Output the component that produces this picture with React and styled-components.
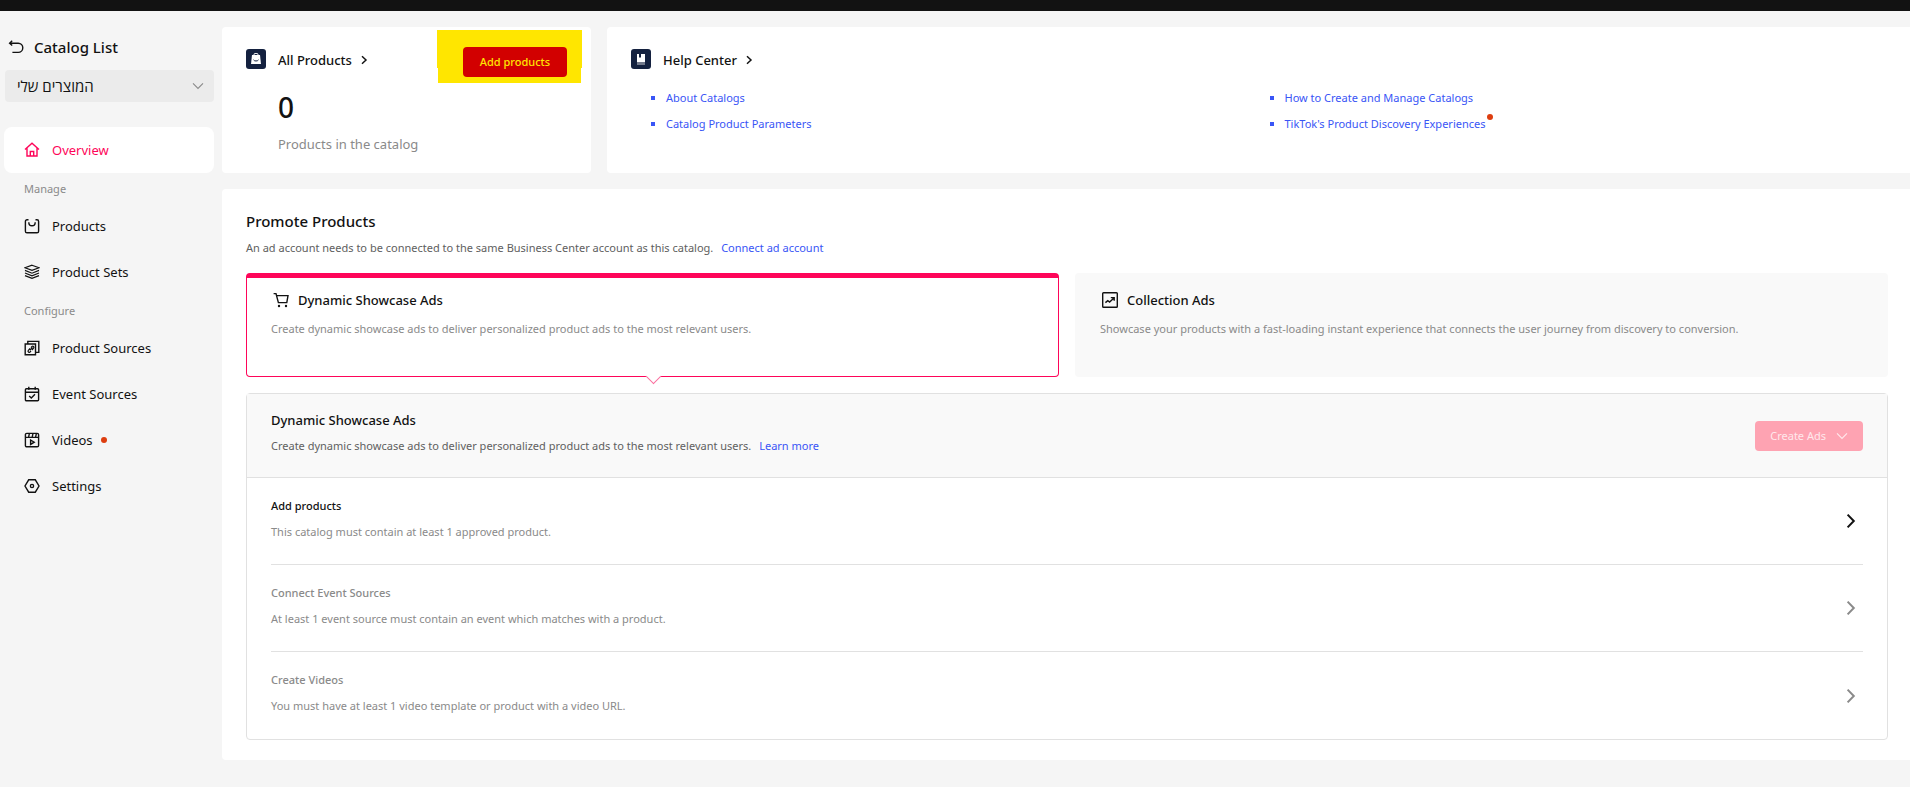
import React from 'react';
import styled, { createGlobalStyle, css } from 'styled-components';

const GlobalStyle = createGlobalStyle`
    * {
        box-sizing: border-box;
    }
    body {
        margin: 0;
        background: #f5f5f5;
        color: #121212;
        font-family: 'Noto Sans', 'Open Sans', sans-serif;
        font-size: 13px;
        line-height: 20px;
    }
    h1, h2, h3, p, ul {
        margin: 0;
        padding: 0;
    }
    button, select {
        font-family: inherit;
    }
`
const TopBar = styled.header`
    height: 11px;
    background: #121212;
`
const Page = styled.div`
    display: flex;
    min-height: calc(100vh - 11px);
    background: #f5f5f5;
`
const Sidebar = styled.aside`
    flex: 0 0 222px;
    padding: 24px 8px 0 4px;
`
const BackLink = styled.a`
    display: flex;
    align-items: center;
    gap: 10px;
    height: 24px;
    padding-left: 4px;
    color: #121212;
    font-size: 15px;
    font-weight: 500;
    text-decoration: none;
`
const SelectBox = styled.div`
    display: grid;
    align-items: center;
    margin: 11px 0 25px 1px;

    > * {
        grid-area: 1 / 1;
    }
    svg {
        justify-self: end;
        margin-right: 10px;
        pointer-events: none;
    }
`
const CatalogSelect = styled.select`
    appearance: none;
    width: 100%;
    height: 32px;
    padding: 0 32px 0 12px;
    border: none;
    border-radius: 4px;
    background: #ebebeb;
    color: #121212;
    font-size: 15px;
`
const NavLink = styled.a`
    display: flex;
    align-items: center;
    height: 46px;
    padding-left: 20px;
    border-radius: 8px;
    background: ${({ $active }) => $active ? '#ffffff' : 'transparent'};
    color: ${({ $active }) => $active ? '#fe0559' : '#121212'};
    text-decoration: none;

    svg {
        margin-right: 12px;
    }
`
const NavLabel = styled.div`
    height: 30px;
    padding: 6px 0 0 20px;
    color: #8a8a8a;
    font-size: 11px;
`
const Dot = styled.span`
    width: 6px;
    height: 6px;
    border-radius: 50%;
    background: #dd3d0f;
    margin: ${({ $raised }) => $raised ? '0 0 14px 2px' : '0 0 0 8px'};
`
const Content = styled.main`
    flex: 1;
    min-width: 0;
    padding: 16px 0 28px;
`
const TopRow = styled.div`
    display: flex;
    gap: 16px;
    margin-bottom: 16px;
`
const Card = styled.section`
    min-height: 146px;
    padding: 22px 22px 0 24px;
    border-radius: 4px;
    background: #ffffff;
`
const ProductsCard = styled(Card)`
    flex: 0 0 369px;
    padding-right: 24px;
`
const HelpCard = styled(Card)`
    flex: 1;
    border-radius: 4px 0 0 4px;
`
const CardHead = styled.div`
    display: flex;
    align-items: center;
    height: 20px;
`
const CardTitle = styled.h2`
    display: flex;
    align-items: center;
    gap: 8px;
    margin-left: 12px;
    padding-top: 2px;
    font-size: 13px;
    font-weight: 500;
`
const Highlight = styled.div`
    position: relative;
    z-index: 0;
    align-self: flex-start;
    margin: -2px 0 0 auto;

    &::before, &::after {
        content: '';
        position: absolute;
        z-index: -1;
        background: #ffe600;
    }
    &::before {
        inset: -17px -15px 9px -26px;
    }
    &::after {
        inset: 20px -14px -6px -25px;
    }
`
const Button = styled.button`
    display: flex;
    align-items: center;
    justify-content: center;
    gap: 10px;
    min-width: 104px;
    height: 30px;
    padding: 0 15px;
    border: none;
    border-radius: 4px;
    font-size: 11px;
    line-height: 20px;
    background: #fea3b2;
    color: #ffe8ec;
    white-space: nowrap;
`
const AddButton = styled(Button)`
    background: #d20000;
    color: #ffe600;
    font-weight: 500;
`
const Stat = styled.div`
    padding: 21px 0 0 32px;
    color: #8a8a8a;
`
const StatNumber = styled.div`
    margin-bottom: 10px;
    color: #121212;
    font-size: 28px;
    font-weight: 500;
    line-height: 34px;
`
const LinkList = styled.ul`
    display: grid;
    grid-template-columns: 1fr 1fr;
    margin: 16px 0 0 20px;
    list-style: none;
`
const LinkItem = styled.li`
    display: flex;
    align-items: center;
    height: 26px;
    font-size: 11px;

    &::before {
        content: '';
        width: 4px;
        height: 4px;
        margin-right: 11px;
        background: #3955f6;
    }
`
const TextLink = styled.a`
    color: #3955f6;
    text-decoration: none;
`
const Promote = styled.section`
    padding: 21px 22px 20px 24px;
    border-radius: 4px 0 0 4px;
    background: #ffffff;
`
const PromoteTitle = styled.h1`
    margin-bottom: 6px;
    font-size: 15px;
    font-weight: 500;
    line-height: 22px;
`
const Text = styled.p`
    color: ${({ $muted }) => $muted ? '#8a8a8a' : '#606060'};
    font-size: 11px;
    line-height: 20px;

    a {
        margin-left: 5px;
    }
`
const AdTypes = styled.div`
    display: grid;
    grid-template-columns: 1fr 1fr;
    gap: 16px;
    margin: 15px 0 16px;
`
const AdType = styled.button`
    position: relative;
    min-height: 104px;
    padding: 17px 25px;
    border: none;
    border-radius: 4px;
    background: #f9f9f9;
    color: #121212;
    text-align: left;
    display: flex;
    flex-direction: column;
    gap: 9px;

    ${({ $selected }) => $selected && css`
        padding: 12px 24px;
        border: 1px solid #fe0559;
        border-top-width: 5px;
        background: #ffffff;

        &::after {
            content: '';
            position: absolute;
            left: calc(50% - 5px);
            bottom: -6px;
            width: 10px;
            height: 10px;
            border: solid #fb6f9f;
            border-width: 0 1px 1px 0;
            background: #ffffff;
            transform: rotate(45deg);
        }
    `}
`
const AdTitle = styled.span`
    display: flex;
    align-items: center;
    gap: 9px;
    padding-left: 2px;
    font-size: 13px;
    font-weight: 500;
    line-height: 20px;
`
const Steps = styled.section`
    border: 1px solid #e1e1e1;
    border-radius: 4px;
`
const StepsHead = styled.div`
    display: flex;
    align-items: center;
    justify-content: space-between;
    height: 84px;
    padding: 0 24px;
    border-bottom: 1px solid #e1e1e1;
    background: #f9f9f9;
`
const StepText = styled.div`
    padding-bottom: 5px;
`
const StepsTitle = styled.h2`
    margin-bottom: 6px;
    font-size: 13px;
    font-weight: 500;
`
const Step = styled.a`
    display: flex;
    align-items: center;
    justify-content: space-between;
    height: 87px;
    margin: 0 24px;
    padding-right: 7px;
    border-bottom: ${({ $last }) => $last ? 'none' : '1px solid #e1e1e1'};
    color: ${({ $enabled }) => $enabled ? '#121212' : '#8a8a8a'};
    text-decoration: none;
`
const StepTitle = styled.h3`
    margin-bottom: 6px;
    font-size: 11px;
    font-weight: 500;
`

const icons = {
    overview: <><path d="M1 7.4 8 1.2l7 6.2M3 6.2V14h10V6.2" /><path d="M6.3 14V9.5h3.4V14" /></>,
    products: <><path d="M4.5 1.8H3A1.6 1.6 0 0 0 1.4 3.4v9.8A1.6 1.6 0 0 0 3 14.8h10a1.6 1.6 0 0 0 1.6-1.6V3.4A1.6 1.6 0 0 0 13 1.8h-1.5" /><path d="M4.8 4.2c0 4.8 6.4 4.8 6.4 0" /></>,
    sets: <path strokeWidth="1.2" d="M8 1.2 15 3.8 8 6.4 1 3.8zM1 6.4 8 9.2l7-2.8M1 9l7 2.8L15 9M1 11.6l7 2.8 7-2.8" />,
    sources: <><path d="M1.2 4h10.3v10.8H1.2zM3.8 4V1.4h11v11h-3" /><path strokeWidth="1.2" d="m6 8.4-1.8 2.2c-.7.9.9 2.4 1.8 1.5l1-1.2M6.1 10.1l2.3-2.8M7 7.6l1-1.2c1-.9 2.5.6 1.7 1.5L8 10" /></>,
    events: <><rect x="1.4" y="2.8" width="13.2" height="12" rx="1" /><path d="M1.4 6.2h13.2M4.8.8v3M11.2.8v3M5.2 10l2.1 2 3.7-3.7" /></>,
    videos: <><rect x="1.4" y="1.4" width="13.2" height="13.4" rx="1.4" /><path d="M1.4 5.4h13.2M5.4 1.4 4.6 5.2M9 1.4l-.8 3.8M12.4 1.4l-.8 3.8" /><path d="m6.6 8 3.6 2.2-3.6 2.2z" /></>,
    settings: <><path d="M4.7 1.8h6.6L15 8l-3.7 6.2H4.7L1 8z" /><circle cx="8" cy="8" r="1.6" /></>,
    back: <path d="M4.2 1.8 1.6 4.2l2.6 2.4M1.8 4.2h8.4a4.6 4.6 0 0 1 0 9.2H4.4" />,
    cart: <><path d="M.6 1.6H3l2.4 9h8.4l1.2-7H3.7" /><circle cx="6" cy="14" r="1.2" fill="currentColor" stroke="none" /><circle cx="13" cy="14" r="1.2" fill="currentColor" stroke="none" /></>,
    collection: <><rect x=".7" y=".7" width="14.6" height="14.6" rx=".8" /><path d="m3.4 10.6 2.4-2 1.8 1.4 3.8-3.6M8.8 5.6h3.4v3.2" /></>,
}

function Icon({ name }) {
    return (
        <svg width="16" height="16" viewBox="0 0 16 16" fill="none" stroke="currentColor" strokeWidth="1.4" aria-hidden="true">
            {icons[name]}
        </svg>
    )
}

function ChevronDown({ color }) {
    return (
        <svg width="12" height="8" viewBox="0 0 12 8" fill="none" stroke={color} strokeWidth="1.1" aria-hidden="true">
            <path d="m1 1.4 5 5 5-5" />
        </svg>
    )
}

function ChevronRight({ large }) {
    return (
        <svg width={large ? 10 : 8} height={large ? 16 : 10} viewBox={large ? '0 0 10 16' : '0 0 8 10'} fill="none" stroke="currentColor" strokeWidth={large ? 2 : 1.5} aria-hidden="true">
            <path d={large ? 'm1.6 1.6 6.2 6.4-6.2 6.4' : 'm2 1.2 4 3.8-4 3.8'} />
        </svg>
    )
}

function BagBadge() {
    return (
        <svg width="20" height="20" viewBox="0 0 20 20" aria-hidden="true">
            <rect width="20" height="20" rx="3" fill="#14213f" />
            <path d="M8 6.5V5.6q0-1.1 1.1-1.1h1.8q1.1 0 1.1 1.1v.9" fill="none" stroke="#ffffff" />
            <path d="M6 6h8l1 9H5z" fill="#ffffff" />
            <path d="M7.5 10.8c.8 1.6 4.2 1.6 5 0" fill="none" stroke="#14213f" />
        </svg>
    )
}

function BookBadge() {
    return (
        <svg width="20" height="20" viewBox="0 0 20 20" aria-hidden="true">
            <rect width="20" height="20" rx="3" fill="#14213f" />
            <path d="M6 5h8v8H6z" fill="#ffffff" />
            <path d="M6 13h8v3H6z" fill="#737a8c" />
            <path d="M8 5h2v4L9 8l-1 1z" fill="#14213f" />
        </svg>
    )
}

const sections = [
    { items: [{ icon: 'overview', text: 'Overview', active: true }] },
    { label: 'Manage', items: [{ icon: 'products', text: 'Products' }, { icon: 'sets', text: 'Product Sets' }] },
    {
        label: 'Configure',
        items: [
            { icon: 'sources', text: 'Product Sources' },
            { icon: 'events', text: 'Event Sources' },
            { icon: 'videos', text: 'Videos', dot: true },
            { icon: 'settings', text: 'Settings' },
        ],
    },
]

const helpLinks = [
    { text: 'About Catalogs' },
    { text: 'How to Create and Manage Catalogs' },
    { text: 'Catalog Product Parameters' },
    { text: "TikTok's Product Discovery Experiences", dot: true },
]

const steps = [
    { title: 'Add products', text: 'This catalog must contain at least 1 approved product.', enabled: true },
    { title: 'Connect Event Sources', text: 'At least 1 event source must contain an event which matches with a product.' },
    { title: 'Create Videos', text: 'You must have at least 1 video template or product with a video URL.' },
]

function App() {
    return (
        <>
            <GlobalStyle />
            <TopBar />
            <Page>
                <Sidebar>
                    <BackLink href="#catalogs"><Icon name="back" />Catalog List</BackLink>
                    <SelectBox>
                        <CatalogSelect aria-label="Catalog">
                            <option>המוצרים שלי</option>
                        </CatalogSelect>
                        <ChevronDown color="#8a8a8a" />
                    </SelectBox>
                    <nav>
                        {sections.map((section, index) => (
                            <React.Fragment key={index}>
                                {section.label && <NavLabel>{section.label}</NavLabel>}
                                {section.items.map((item) => (
                                    <NavLink key={item.text} href={`#${item.icon}`} $active={item.active}>
                                        <Icon name={item.icon} />
                                        {item.text}
                                        {item.dot && <Dot />}
                                    </NavLink>
                                ))}
                            </React.Fragment>
                        ))}
                    </nav>
                </Sidebar>
                <Content>
                    <TopRow>
                        <ProductsCard>
                            <CardHead>
                                <BagBadge />
                                <CardTitle>All Products <ChevronRight /></CardTitle>
                                <Highlight>
                                    <AddButton type="button">Add products</AddButton>
                                </Highlight>
                            </CardHead>
                            <Stat>
                                <StatNumber>0</StatNumber>
                                Products in the catalog
                            </Stat>
                        </ProductsCard>
                        <HelpCard>
                            <CardHead>
                                <BookBadge />
                                <CardTitle>Help Center <ChevronRight /></CardTitle>
                            </CardHead>
                            <LinkList>
                                {helpLinks.map((link) => (
                                    <LinkItem key={link.text}>
                                        <TextLink href="#help">{link.text}</TextLink>
                                        {link.dot && <Dot $raised />}
                                    </LinkItem>
                                ))}
                            </LinkList>
                        </HelpCard>
                    </TopRow>
                    <Promote>
                        <PromoteTitle>Promote Products</PromoteTitle>
                        <Text>
                            An ad account needs to be connected to the same Business Center account as this catalog.{' '}
                            <TextLink href="#connect">Connect ad account</TextLink>
                        </Text>
                        <AdTypes>
                            <AdType type="button" $selected>
                                <AdTitle><Icon name="cart" />Dynamic Showcase Ads</AdTitle>
                                <Text as="span" $muted>Create dynamic showcase ads to deliver personalized product ads to the most relevant users.</Text>
                            </AdType>
                            <AdType type="button">
                                <AdTitle><Icon name="collection" />Collection Ads</AdTitle>
                                <Text as="span" $muted>Showcase your products with a fast-loading instant experience that connects the user journey from discovery to conversion.</Text>
                            </AdType>
                        </AdTypes>
                        <Steps>
                            <StepsHead>
                                <StepText>
                                    <StepsTitle>Dynamic Showcase Ads</StepsTitle>
                                    <Text>
                                        Create dynamic showcase ads to deliver personalized product ads to the most relevant users.{' '}
                                        <TextLink href="#learn">Learn more</TextLink>
                                    </Text>
                                </StepText>
                                <Button type="button">Create Ads <ChevronDown color="#ffe8ec" /></Button>
                            </StepsHead>
                            {steps.map((step, index) => (
                                <Step key={step.title} href="#step" $enabled={step.enabled} $last={steps.length - 1 === index}>
                                    <StepText>
                                        <StepTitle>{step.title}</StepTitle>
                                        <Text $muted>{step.text}</Text>
                                    </StepText>
                                    <ChevronRight large />
                                </Step>
                            ))}
                        </Steps>
                    </Promote>
                </Content>
            </Page>
        </>
    );
}

export default App;
